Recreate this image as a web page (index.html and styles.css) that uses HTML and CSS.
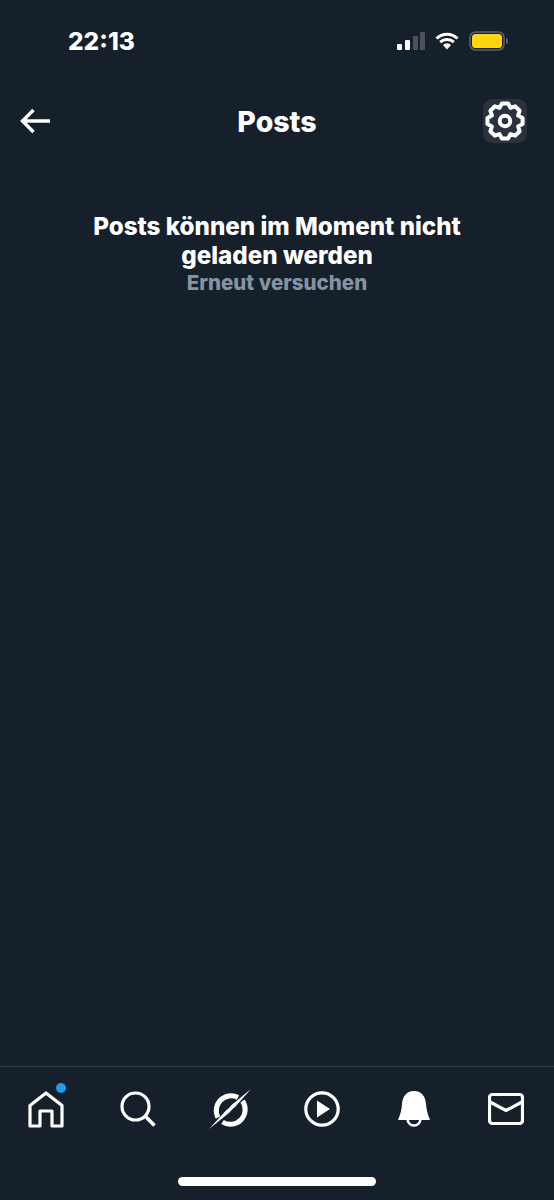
FILE: index.html
```html
<!DOCTYPE html>
<html lang="de">
<head>
    <meta charset="UTF-8">
    <meta name="viewport" content="width=device-width, initial-scale=1.0">
    <title>Posts</title>
    <link rel="stylesheet" href="styles.css">
</head>
<body>
    <!-- Status bar -->
    <div class="status-bar">
        <span class="time">22:13</span>
        <div class="status-icons">
            <svg class="signal" width="28" height="18" viewBox="0 0 28 18">
                <rect x="0" y="12" width="5" height="6" rx="1" fill="#fff"/>
                <rect x="8" y="8" width="5" height="10" rx="1" fill="#fff"/>
                <rect x="16" y="4" width="5" height="14" rx="1" fill="#4a525c"/>
                <rect x="23" y="0" width="5" height="18" rx="1" fill="#4a525c"/>
            </svg>
            <svg class="wifi" width="24" height="18" viewBox="0 0 24 18">
                <path d="M1.500 6.500a15 15 0 0 1 21 0M5.200 10.200a10 10 0 0 1 13.600 0" fill="none" stroke="#fff" stroke-width="3"/>
                <path d="M8 13a5.600 5.600 0 0 1 8 0l-4 4.500z" fill="#fff"/>
            </svg>
            <svg class="battery" width="40" height="20" viewBox="0 0 40 20">
                <rect x="1" y="1" width="34" height="18" rx="5.500" fill="none" stroke="#5b636e" stroke-width="1.500"/>
                <rect x="3" y="3" width="30" height="14" rx="3.500" fill="#ffd60a"/>
                <path d="M37 7c1.500.5 2 1.500 2 3s-.5 2.500-2 3z" fill="#5b636e"/>
            </svg>
        </div>
    </div>

    <!-- Header -->
    <header class="nav">
        <button class="back-button" aria-label="back">
            <svg width="32" height="26" viewBox="0 0 32 26">
                <path d="M30 13H3M13.500 2 2.500 13l11 11" fill="none" stroke="#fff" stroke-width="3.400"/>
            </svg>
        </button>
        <h1>Posts</h1>
        <button class="settings-button" aria-label="settings">
            <svg width="42" height="42" viewBox="-1 -1 40 40">
                <path d="M16.050 2.260h5.900l2.220 4.270 4.580-1.460 4.180 4.180-1.460 4.580 4.270 2.220v5.900l-4.270 2.220 1.460 4.580-4.180 4.180-4.580-1.460-2.220 4.270h-5.900l-2.220-4.270-4.580 1.460-4.180-4.180 1.460-4.580-4.270-2.220v-5.900l4.270-2.220-1.460-4.580 4.180-4.180 4.580 1.460z" fill="none" stroke="#fff" stroke-width="3.800" stroke-linejoin="round"/>
                <circle cx="19" cy="19" r="5" fill="none" stroke="#fff" stroke-width="3.800"/>
            </svg>
        </button>
    </header>

    <main class="content">
        <p class="error-title">Posts können im Moment nicht geladen werden</p>
        <p class="retry">Erneut versuchen</p>
    </main>

    <!-- Bottom tabs -->
    <nav class="tab-bar">
        <div class="tabs">
            <div class="tab">
                <span class="tab-icon">
                    <svg width="36" height="38" viewBox="0 0 36 38">
                        <path d="M2 36V15.500L18 3l16 12.500V36H24V21H12v15z" fill="none" stroke="#fff" stroke-width="3.200" stroke-linejoin="round"/>
                    </svg>
                    <span class="badge"></span>
                </span>
            </div>
            <div class="tab">
                <svg width="36" height="36" viewBox="0 0 36 36">
                    <circle cx="15.500" cy="15.500" r="13.500" fill="none" stroke="#fff" stroke-width="3.200"/>
                    <path d="M25 25l9.500 9.500" stroke="#fff" stroke-width="3.500" fill="none"/>
                </svg>
            </div>
            <div class="tab">
                <svg width="44" height="42" viewBox="0 0 44 42">
                    <path d="M30 9.500A14.800 14.800 0 0 0 10 29.500M14.500 34A14.800 14.800 0 0 0 34.500 13" fill="none" stroke="#fff" stroke-width="5"/>
                    <path d="M43 1 23.500 17l-2.500 3-3 2.500L1 41l20.500-16.500 2.500-3 3-2.500z" fill="#fff"/>
                </svg>
            </div>
            <div class="tab">
                <svg width="36" height="36" viewBox="0 0 36 36">
                    <circle cx="18" cy="18" r="16.200" fill="none" stroke="#fff" stroke-width="3.200"/>
                    <path d="M13 9.500 26 18l-13 8.500z" fill="#fff"/>
                </svg>
            </div>
            <div class="tab">
                <svg width="32" height="36" viewBox="0 0 32 36">
                    <path d="M16 0C8 0 4.500 6 4 13c-.5 6-1.500 10-4 16h32c-2.500-6-3.500-10-4-16C27.500 6 24 0 16 0z" fill="#fff"/>
                    <path d="M9.500 28a6.500 6.500 0 0 0 13 0" fill="none" stroke="#fff" stroke-width="2.500"/>
                </svg>
            </div>
            <div class="tab">
                <svg width="36" height="32" viewBox="0 0 36 32">
                    <rect x="1.500" y="1.500" width="33" height="29" rx="3" fill="none" stroke="#fff" stroke-width="3.200"/>
                    <path d="M2 9l16 8.500L34 9" fill="none" stroke="#fff" stroke-width="3.200"/>
                </svg>
            </div>
        </div>
        <div class="home-indicator"></div>
    </nav>
</body>
</html>
```

FILE: styles.css
```css
body {
    font-family: 'Inter', 'Liberation Sans', sans-serif;
    background: #16202b;
    color: #fff;
    margin: 0;
    height: 1200px;
    display: flex;
    flex-direction: column;
    overflow: hidden;
}

.status-bar {
    height: 82px;
    padding: 0 45px 0 68px;
    display: flex;
    justify-content: space-between;
    align-items: center;
    flex-shrink: 0;
}

.time {
    font-size: 24.500px;
    font-weight: 800;
    line-height: 1;
}

.status-icons {
    display: flex;
    align-items: center;
    gap: 10px;
}

.nav {
    height: 78px;
    padding: 0 27px 0 20px;
    display: flex;
    justify-content: space-between;
    align-items: center;
    position: relative;
    flex-shrink: 0;
}

.nav h1 {
    position: absolute;
    left: 0;
    right: 0;
    margin: 0;
    text-align: center;
    font-size: 28.500px;
    font-weight: 800;
}

.back-button {
    background: transparent;
    border: none;
    padding: 0;
    display: flex;
}

.settings-button {
    width: 44px;
    height: 44px;
    background: #2a323d;
    border: none;
    border-radius: 9px;
    padding: 1px;
    display: flex;
    position: relative;
    z-index: 1;
}

.content {
    flex: 1;
    padding: 52px 80px 0;
    text-align: center;
}

.content p {
    margin: 0;
}

.error-title {
    font-size: 24.200px;
    font-weight: 800;
    line-height: 29px;
}

.retry {
    font-size: 20.500px;
    font-weight: 800;
    line-height: 26px;
    color: #8593a3;
}

.tab-bar {
    height: 133px;
    border-top: 1px solid #323b47;
    display: flex;
    flex-direction: column;
    align-items: center;
    flex-shrink: 0;
}

.tabs {
    box-sizing: border-box;
    width: 100%;
    height: 84px;
    padding-right: 2px;
    display: grid;
    grid-template-columns: repeat(6, 1fr);
    align-items: center;
}

.tab {
    display: flex;
    justify-content: center;
}

.tab-icon {
    position: relative;
    display: flex;
}

.badge {
    position: absolute;
    top: -7px;
    right: -2px;
    width: 10px;
    height: 10px;
    background: #1d9bf0;
    border-radius: 50%;
}

.home-indicator {
    width: 198px;
    height: 9px;
    margin-top: 26px;
    background: #fff;
    border-radius: 5px;
}
```
